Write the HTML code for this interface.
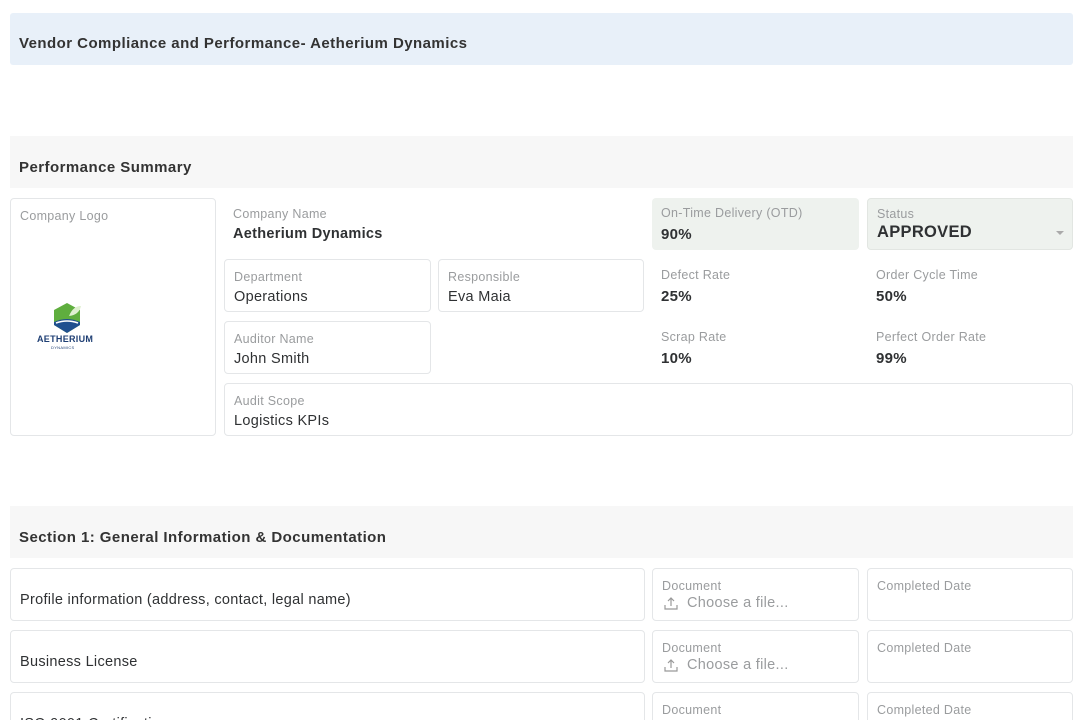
<!DOCTYPE html>
<html><head><style>
html,body{margin:0;width:1080px;height:720px;overflow:hidden}
body{background:#fff;font-family:"Liberation Sans",sans-serif;position:relative;color:#2f3133;letter-spacing:0.3px}
.a{position:absolute;box-sizing:border-box}
.box{border:1px solid #e4e6e8;border-radius:4px}
.lbl{position:absolute;left:9px;top:10px;font-size:12.5px;color:#9a9c9e}
.val{position:absolute;left:9px;top:29px;font-size:14.5px;color:#2f3133}
.b{font-weight:bold}
.hdr{font-weight:bold;font-size:15px;color:#333;letter-spacing:0.45px}
</style></head><body>
<div class="a" style="left:10px;top:13px;width:1063px;height:52px;background:#e8f0f9;border-radius:3px"><div class="a hdr" style="left:9px;top:22px">Vendor Compliance and Performance- Aetherium Dynamics</div></div>

<div class="a" style="left:10px;top:136px;width:1063px;height:52px;background:#f7f7f7"><div class="a hdr" style="left:9px;top:23px">Performance Summary</div></div>

<div class="a box" style="left:10px;top:198px;width:206px;height:238px"><div class="lbl">Company Logo</div>
<svg class="a" style="left:40px;top:103px" width="32" height="32" viewBox="0 0 32 32"><polygon points="16,1 29,8 29,23 16,31 3,23 3,8" fill="#5fae3e"/><path d="M3 20 Q16 14 29 20 L29 23 16 31 3 23Z" fill="#1f4f8f"/><path d="M5 21 Q16 17 27 21" stroke="#fff" stroke-width="1.5" fill="none"/><path d="M18 14 Q22 4 30 4 Q28 13 18 14Z" fill="#dff0d0"/></svg>
<div class="a" style="left:26px;top:135px;font-size:9px;font-weight:bold;color:#1f3f74;letter-spacing:0.3px">AETHERIUM</div>
<div class="a" style="left:40px;top:146px;font-size:4px;color:#1f3f74">DYNAMICS</div>
</div>

<div class="a" style="left:224px;top:198px;width:400px;height:50px"><div class="lbl" style="top:9px">Company Name</div><div class="val b" style="top:28px">Aetherium Dynamics</div></div>
<div class="a box" style="left:224px;top:259px;width:207px;height:53px"><div class="lbl">Department</div><div class="val">Operations</div></div>
<div class="a box" style="left:438px;top:259px;width:206px;height:53px"><div class="lbl">Responsible</div><div class="val">Eva Maia</div></div>
<div class="a box" style="left:224px;top:321px;width:207px;height:53px"><div class="lbl">Auditor Name</div><div class="val">John Smith</div></div>
<div class="a box" style="left:224px;top:383px;width:849px;height:53px"><div class="lbl">Audit Scope</div><div class="val">Logistics KPIs</div></div>

<div class="a" style="left:652px;top:198px;width:207px;height:52px;background:#eef2ee;border-radius:4px"><div class="lbl" style="top:8px">On-Time Delivery (OTD)</div><div class="val b" style="top:28px;font-size:15px">90%</div></div>
<div class="a" style="left:867px;top:198px;width:206px;height:52px;background:#eef2ee;border-radius:4px;border:1px solid #e2e6e2"><div class="lbl" style="top:8px">Status</div><div class="val b" style="top:24px;font-size:16.5px">APPROVED</div><div class="a" style="left:188px;top:32px;width:0;height:0;border-left:4px solid transparent;border-right:4px solid transparent;border-top:4px solid #aaa"></div></div>
<div class="a" style="left:652px;top:260px;width:200px;height:50px"><div class="lbl" style="top:8px">Defect Rate</div><div class="val b" style="top:28px;font-size:15px">25%</div></div>
<div class="a" style="left:867px;top:260px;width:200px;height:50px"><div class="lbl" style="top:8px">Order Cycle Time</div><div class="val b" style="top:28px;font-size:15px">50%</div></div>
<div class="a" style="left:652px;top:322px;width:200px;height:50px"><div class="lbl" style="top:8px">Scrap Rate</div><div class="val b" style="top:28px;font-size:15px">10%</div></div>
<div class="a" style="left:867px;top:322px;width:200px;height:50px"><div class="lbl" style="top:8px">Perfect Order Rate</div><div class="val b" style="top:28px;font-size:15px">99%</div></div>

<div class="a" style="left:10px;top:506px;width:1063px;height:52px;background:#f7f7f7"><div class="a hdr" style="left:9px;top:23px">Section 1: General Information &amp; Documentation</div></div>

<div class="a box" style="left:10px;top:568px;width:635px;height:53px"><div class="val" style="top:23px">Profile information (address, contact, legal name)</div></div>
<div class="a box" style="left:652px;top:568px;width:207px;height:53px"><div class="lbl">Document</div><div class="val" style="color:#9a9c9e;left:34px;top:26px">Choose a file...</div><svg class="a" style="left:11px;top:27px" width="14" height="14" viewBox="0 0 14 14" fill="none" stroke="#999" stroke-width="1.2"><path d="M7 10V2M4 5l3-3 3 3M1 9v4h12V9"/></svg></div>
<div class="a box" style="left:867px;top:568px;width:206px;height:53px"><div class="lbl">Completed Date</div></div>

<div class="a box" style="left:10px;top:630px;width:635px;height:53px"><div class="val" style="top:23px">Business License</div></div>
<div class="a box" style="left:652px;top:630px;width:207px;height:53px"><div class="lbl">Document</div><div class="val" style="color:#9a9c9e;left:34px;top:26px">Choose a file...</div><svg class="a" style="left:11px;top:27px" width="14" height="14" viewBox="0 0 14 14" fill="none" stroke="#999" stroke-width="1.2"><path d="M7 10V2M4 5l3-3 3 3M1 9v4h12V9"/></svg></div>
<div class="a box" style="left:867px;top:630px;width:206px;height:53px"><div class="lbl">Completed Date</div></div>

<div class="a box" style="left:10px;top:692px;width:635px;height:53px"><div class="val" style="top:23px">ISO 9001 Certification</div></div>
<div class="a box" style="left:652px;top:692px;width:207px;height:53px"><div class="lbl">Document</div></div>
<div class="a box" style="left:867px;top:692px;width:206px;height:53px"><div class="lbl">Completed Date</div></div>
</body></html>
